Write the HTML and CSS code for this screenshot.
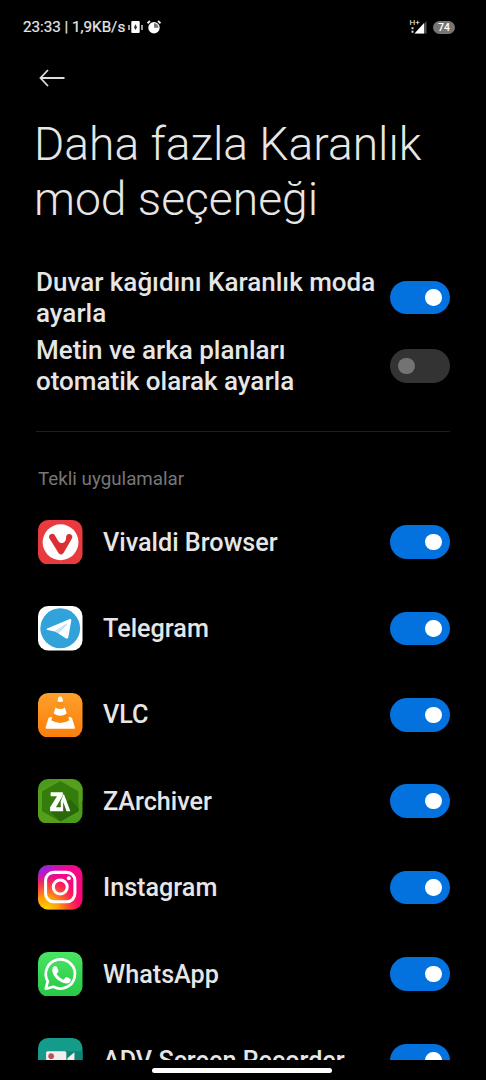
FILE: index.html
```html
<!DOCTYPE html>
<html lang="tr">
<head>
<meta charset="utf-8">
<title>Daha fazla Karanlık mod seçeneği</title>
<link rel="stylesheet" href="styles.css">
</head>
<body>
<div class="screen">
  <header class="status">
    <div class="status-left">
      <span class="clock">23:33 | 1,9KB/s</span>
      <svg class="vibrate" viewBox="0 0 15 14" width="15" height="14"><path d="M1 5v5M14 5v5" stroke="#eee" stroke-width="1.3"/><rect x="3.3" y="1" width="8.4" height="12" rx="1" fill="#fff"/><path d="M7.5 4.3 9 7.3 7.5 10 6 7.3Z" fill="#333"/></svg>
      <svg class="alarm" viewBox="0 0 16 16" width="16" height="16"><circle cx="8" cy="8.7" r="5.7" fill="#fff"/><path d="M8 4.2v4.5h4.5A4.5 4.5 0 0 0 8 4.2Z" fill="#777"/><path d="M1.5 4.2 4 2M12 2l2.5 2.2" stroke="#eee" stroke-width="1.8"/></svg>
    </div>
    <div class="status-right">
      <svg viewBox="0 0 20 18" width="20" height="18"><text x="0.5" y="6.5" class="network">H+</text><path d="M2.5 9.3h2v2h-2zM2.5 12.8h2v2h-2z" fill="#ddd"/><path d="M17.5 3v12.5H6Z" fill="#555"/><path d="M15 5v10.5H5.5Z" fill="#fff"/></svg>
      <span class="battery">74</span>
    </div>
  </header>
  <main class="content">
    <svg class="back" viewBox="0 0 28 20" width="28" height="20"><path d="M26.5 10H2.5M10 2 2.5 10l7.5 8" fill="none" stroke="#ddd" stroke-width="1.8"/></svg>
    <h1 class="title">Daha fazla Karanlık<br>mod seçeneği</h1>
    <section class="settings">
      <div class="setting"><span class="setting-name">Duvar kağıdını Karanlık moda<br>ayarla</span><span class="toggle on"></span></div>
      <div class="setting"><span class="setting-name">Metin ve arka planları<br>otomatik olarak ayarla</span><span class="toggle"></span></div>
    </section>
    <h2 class="group">Tekli uygulamalar</h2>
    <section class="apps">
      <div class="app">
        <svg class="icon" viewBox="0 0 44 44"><rect width="44" height="44" rx="10" fill="#e93a3e"/><circle cx="22.3" cy="22" r="17.7" fill="#fff"/><path d="M11.2 18a3.1 3.1 0 0 1 5.3-3.1l3.6 6q2 2.6 4.8 1.7 2.9-1.2 2.9-5.2a3.1 3.1 0 1 1 5.6 1.2L25.2 32.6q-2.4 3-4.9 0Z" fill="#db2f34"/></svg>
        <span class="app-name">Vivaldi Browser</span><span class="toggle on"></span>
      </div>
      <div class="app">
        <svg class="icon" viewBox="0 0 44 44"><rect width="44" height="44" rx="10" fill="#fff"/><circle cx="22" cy="22" r="19.7" fill="#32a2da"/><path d="M8.5 22.4 31.5 12.9Q33.2 12.4 32.9 14.4L30 31Q29.4 33.2 27.3 31.9L19.8 26.9 29 17.4 16.2 25.2 8.7 23.4Z" fill="#fff"/><path d="M16.2 25.2 28.8 17.1 19.8 26.9Z" fill="#d5e8f2"/></svg>
        <span class="app-name">Telegram</span><span class="toggle on"></span>
      </div>
      <div class="app">
        <svg class="icon" viewBox="0 0 44 44"><defs><linearGradient id="vlc" x2="0" y2="1"><stop stop-color="#ffa02b"/><stop offset="1" stop-color="#fb7d0b"/></linearGradient></defs><rect width="44" height="44" rx="10" fill="url(#vlc)"/><path d="M12 24h20q1.3 0 1.7 1.2l2.8 9q.3 1.2-.9 1.2H8.4q-1.2 0-.9-1.2l2.8-9Q10.700 24 12 24Z" fill="#fff"/><path d="M15.500 20 13 27q9 5.400 18 0l-2.500-7Z" fill="#fa880f"/><path d="m17.700 13.500-2.200 6.700q6.500 4.500 13 0l-2.200-6.700Z" fill="#fff"/><path d="m19.300 8.500-2 5.800q4.700 3.200 9.400 0l-2-5.800Z" fill="#fc9218"/><path d="M19.200 8.200 20 4.700q.3-1.200 2-1.200t2 1.200l.8 3.500q-2.800 1.500-5.600 0Z" fill="#fff"/></svg>
        <span class="app-name">VLC</span><span class="toggle on"></span>
      </div>
      <div class="app">
        <svg class="icon" viewBox="0 0 44 44"><rect width="44" height="44" rx="10" fill="#4a9b1b"/><path d="M0 12 22 0h12l10 8v13L22 44H10Q0 44 0 34Z" fill="#559f1c"/><path d="M22 2 40 12v20L22 42 4 32V12Z" fill="#347c0b"/><path d="m32 20 8 9v3L22 42 12 32Z" fill="#29690a"/><path d="M12.500 13h12v3.500L17.700 28H23v4H12v-4l6.800-11h-6.300Z" fill="#fff"/><path d="M25.500 14.500 32 32h-3.800l-3.300-9.500V32h-2.400V22Z" fill="#fff"/></svg>
        <span class="app-name">ZArchiver</span><span class="toggle on"></span>
      </div>
      <div class="app">
        <svg class="icon" viewBox="0 0 44 44"><defs><linearGradient id="ig" x1="0" y1="0" x2="1" y2=".8"><stop stop-color="#872cf2"/><stop offset=".42" stop-color="#ef078f"/><stop offset="1" stop-color="#fc0972"/></linearGradient><radialGradient id="ig2" cx=".18" cy="1" r=".85"><stop stop-color="#ffd600"/><stop offset=".35" stop-color="#ff9b0b"/><stop offset=".7" stop-color="#ff3b38" stop-opacity=".75"/><stop offset="1" stop-color="#ff006a" stop-opacity="0"/></radialGradient></defs><rect width="44" height="44" rx="10" fill="url(#ig)"/><rect width="44" height="44" rx="10" fill="url(#ig2)"/><g fill="none" stroke="#fff" stroke-width="3"><rect x="7.500" y="7.300" width="29" height="29" rx="8"/><circle cx="22" cy="21.800" r="6.900"/></g><circle cx="30.500" cy="13.200" r="2" fill="#fff"/></svg>
        <span class="app-name">Instagram</span><span class="toggle on"></span>
      </div>
      <div class="app">
        <svg class="icon" viewBox="0 0 44 44"><defs><linearGradient id="wa" x2="0" y2="1"><stop stop-color="#4be465"/><stop offset="1" stop-color="#27c846"/></linearGradient></defs><rect width="44" height="44" rx="10" fill="url(#wa)"/><path d="m7.700 36.300 2-7.300A14.400 14.400 0 1 1 15.300 34.400Z" fill="none" stroke="#fff" stroke-width="2.700" stroke-linejoin="round"/><path d="M16.200 14.100h1.400q.8 0 1.100.8l1.500 3.500q.2.7-.3 1.300l-1.200 1.500q-.4.5 0 1.100 2.100 3.200 5.800 4.800.7.3 1.100-.2l1.500-1.800q.5-.6 1.200-.3l3.500 1.700q.7.4.6 1.100c-.2 2.600-2.500 3.700-4.500 3.500-6.200-.7-11.700-5.600-13.300-10.600-.9-2.700-.2-6.400 1.600-6.400Z" fill="#fff"/></svg>
        <span class="app-name">WhatsApp</span><span class="toggle on"></span>
      </div>
      <div class="app">
        <svg class="icon" viewBox="0 0 44 44"><rect width="44" height="44" rx="10" fill="#149b89"/><path d="M28 13h16v31H20Z" fill="#118575"/><rect x="8" y="13" width="20" height="18" rx="1.500" fill="#f2eeee"/><path d="m29 20 7-6v17l-7-6Z" fill="#f2eeee"/><circle cx="13" cy="18" r="2.800" fill="#b95357"/></svg>
        <span class="app-name">ADV Screen Recorder</span><span class="toggle on"></span>
      </div>
    </section>
  </main>
  <footer class="nav"><span class="handle"></span></footer>
</div>
</body>
</html>
```
FILE: styles.css
```css
* { box-sizing: border-box; }

body {
  margin: 0;
  background: #000;
  color: #e6e6e6;
  font-family: Roboto, "Noto Sans", sans-serif;
}

.screen {
  height: 1080px;
  display: flex;
  flex-direction: column;
  overflow: hidden;
}

.status {
  flex: none;
  height: 54px;
  padding: 0 31px 0 23px;
  display: flex;
  align-items: center;
  justify-content: space-between;
}

.status-left,
.status-right { display: flex; align-items: center; }

.clock { font-size: 15.2px; white-space: nowrap; -webkit-text-stroke: 0.2px #e6e6e6; }
.vibrate { margin-left: 3px; }
.alarm { margin-left: 3px; }
.network { font: 8px Roboto, sans-serif; fill: #fff; }

.battery {
  width: 22px;
  height: 13px;
  margin-left: 4px;
  border-radius: 7px;
  background: #757575;
  color: #fff;
  font-size: 10.5px;
  font-weight: 500;
  line-height: 13px;
  text-align: center;
}

.content {
  flex: 1;
  min-height: 0;
  padding: 14px 36px 0;
  overflow: hidden;
}

.back { display: block; margin-left: 2px; }

.title {
  margin: 29px -10px 0 -2px;
  font-size: 46.2px;
  font-weight: 300;
  line-height: 55px;
  white-space: nowrap;
}

.settings {
  margin-top: 36px;
  height: 169px;
  padding-top: 0.4px;
  border-bottom: 1px solid #1e1e1e;
  display: flex;
  flex-direction: column;
}

.setting {
  flex: none;
  height: 68.4px;
  display: flex;
  align-items: center;
  justify-content: space-between;
}

.setting-name {
  font-size: 26px;
  font-weight: 500;
  line-height: 30.5px;
  white-space: nowrap;
}

.toggle {
  flex: none;
  width: 60.5px;
  height: 33.5px;
  padding: 0 8.5px;
  border-radius: 17px;
  background: #333;
  display: flex;
  align-items: center;
}

.toggle::before {
  content: "";
  width: 16.5px;
  height: 16.5px;
  border-radius: 50%;
  background: #737373;
}

.toggle.on { background: #0372df; justify-content: flex-end; }
.toggle.on::before { background: #fff; }

.group {
  margin: 35px 0 0 2px;
  color: #777;
  font-size: 18.8px;
  font-weight: 400;
  line-height: 24px;
}

.apps { margin-top: 7.8px; }

.app {
  height: 86.4px;
  padding-left: 2px;
  display: flex;
  align-items: center;
}

.icon { flex: none; width: 44.5px; height: 44.5px; }

.app-name {
  flex: 1;
  margin-left: 20.5px;
  padding-top: 1.2px;
  font-size: 25.2px;
  font-weight: 500;
  line-height: 30px;
  white-space: nowrap;
}

.nav {
  flex: none;
  height: 20px;
  padding-top: 7.5px;
  display: flex;
  justify-content: center;
  align-items: flex-start;
}

.handle {
  width: 180px;
  height: 5px;
  margin-right: 3px;
  border-radius: 3px;
  background: #fff;
}
```
